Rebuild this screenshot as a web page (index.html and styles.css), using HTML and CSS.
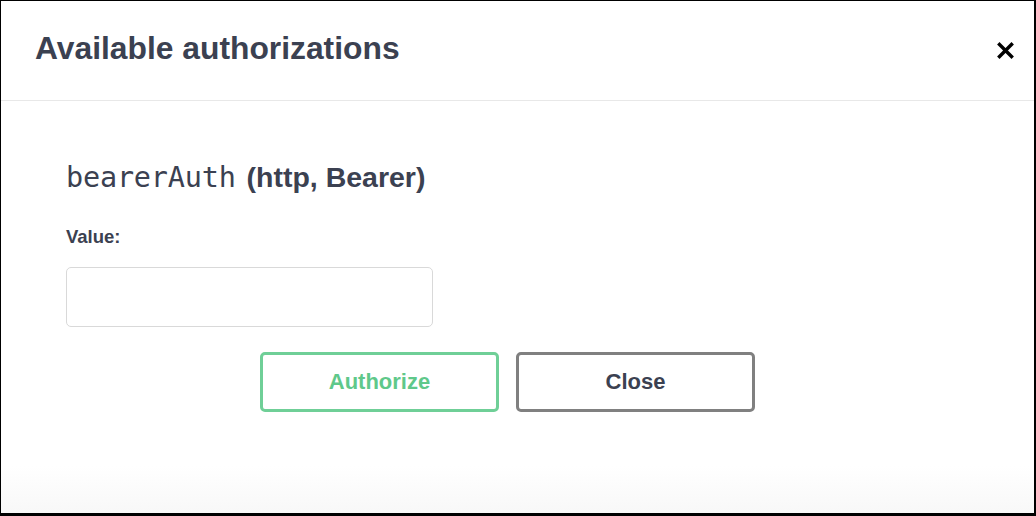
FILE: index.html
```html
<!DOCTYPE html>
<html lang="en">
<head>
    <meta charset="UTF-8">
    <meta name="viewport" content="width=device-width, initial-scale=1.0">
    <title>Available authorizations</title>
    <link rel="stylesheet" href="styles.css">
</head>
<body>
    <div class="modal">
        <div class="modal-header">
            <h3>Available authorizations</h3>
            <button class="close-modal" type="button" aria-label="Close">
                <svg width="17" height="17" viewBox="0 0 17 17">
                    <path d="M2.5 2.5 L14.5 14.5 M14.5 2.5 L2.5 14.5" stroke="#000" stroke-width="3.4" stroke-linecap="square"/>
                </svg>
            </button>
        </div>

        <div class="modal-body">
            <h4><code>bearerAuth</code> (http, Bearer)</h4>
            <label for="auth-value">Value:</label>
            <input type="text" id="auth-value">

            <div class="auth-btn-wrapper">
                <button class="btn authorize" type="button">Authorize</button>
                <button class="btn btn-done" type="button">Close</button>
            </div>
        </div>
    </div>
</body>
</html>
```

FILE: styles.css
```css
/* General Styles */
body, html {
    margin: 0;
    padding: 0;
    height: 100%;
    background-color: #000;
    font-family: "Liberation Sans", Arial, sans-serif;
    color: #3b4151;
}

body {
    display: flex;
    padding: 1px 2px 3px 1px;
    box-sizing: border-box;
}

.modal {
    flex: 1;
    background: linear-gradient(to bottom, #fff 0, #fff 465px, #f8f8f8 100%);
    display: flex;
    flex-direction: column;
}

.modal-header {
    height: 99px;
    border-bottom: 1px solid #e8e8e8;
    display: flex;
    align-items: center;
    justify-content: space-between;
    padding: 0 20px 0 34px;
    background: #fff;
}

.modal-header h3 {
    margin: 0;
    font-size: 31.8px;
    font-weight: bold;
    color: #3b4151;
    padding-bottom: 4px;
}

.close-modal {
    border: none;
    background: none;
    padding: 0;
    margin: 0;
    width: 17px;
    height: 17px;
    cursor: pointer;
    display: flex;
}

.modal-body {
    padding: 58px 0 0 65px;
}

.modal-body h4 {
    margin: 0 0 30px 0;
    font-size: 28.5px;
    font-weight: bold;
    line-height: 36px;
}

.modal-body h4 code {
    font-family: "DejaVu Sans Mono", monospace;
    font-weight: normal;
    font-size: 28.5px;
    letter-spacing: -0.2px;
    margin-right: 3px;
}

.modal-body label {
    display: block;
    font-size: 18.5px;
    font-weight: bold;
    margin-bottom: 19px;
}

.modal-body input {
    display: block;
    width: 367px;
    height: 60px;
    box-sizing: border-box;
    border: 1px solid #d9d9d9;
    border-radius: 5px;
    background: #fff;
    margin: 0;
}

.auth-btn-wrapper {
    display: flex;
    justify-content: center;
    gap: 17px;
    margin: 25px 0 0 -65px;
    padding-right: 20px;
}

.btn {
    width: 239px;
    height: 60px;
    box-sizing: border-box;
    border-radius: 5px;
    background: #fff;
    font-family: "Liberation Sans", Arial, sans-serif;
    font-size: 22px;
    font-weight: bold;
    cursor: pointer;
}

.btn.authorize {
    border: 3px solid #6fcf97;
    color: #5fc88a;
}

.btn.btn-done {
    border: 3px solid #808080;
    color: #3b4151;
}
```
